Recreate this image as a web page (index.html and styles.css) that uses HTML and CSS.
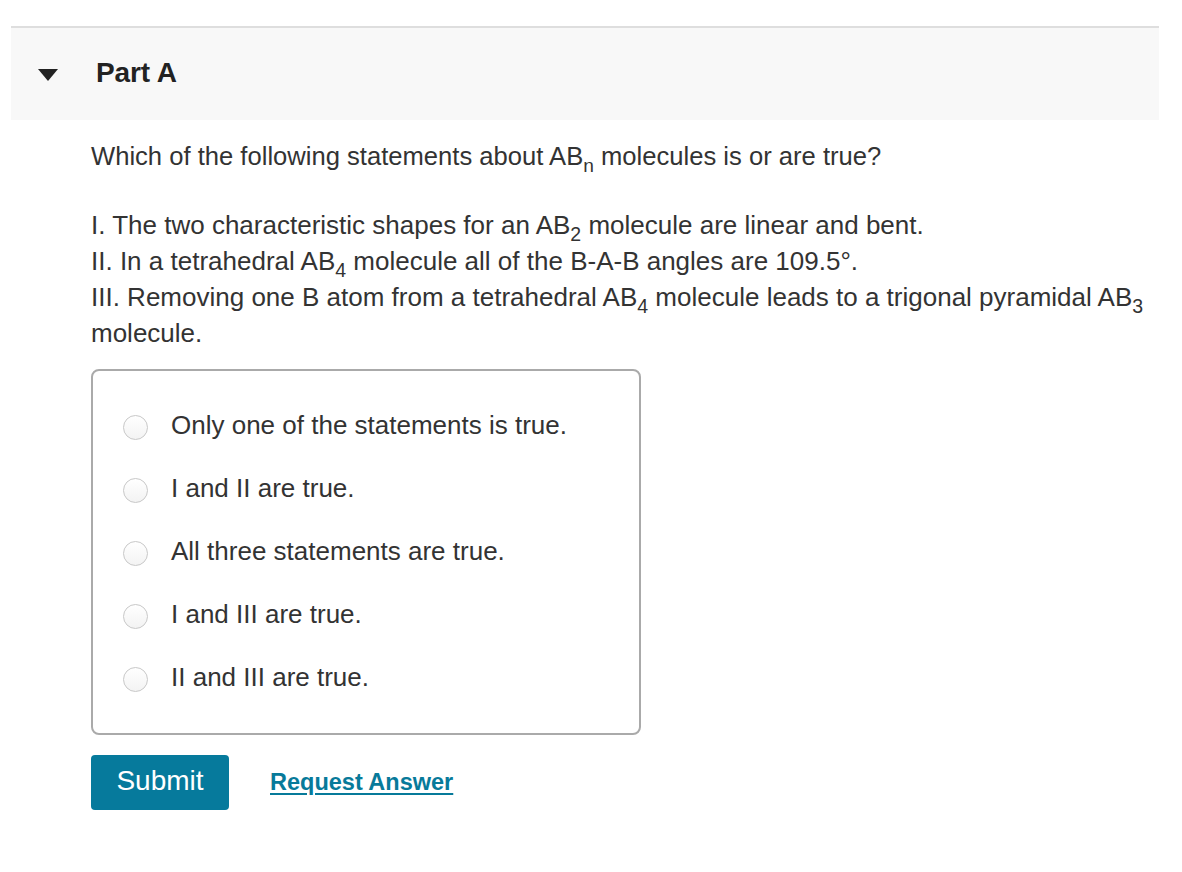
FILE: index.html
```html
<!DOCTYPE html>
<html>
<head>
<meta charset="utf-8">
<link rel="stylesheet" href="styles.css">
</head>
<body>
<div class="part">
  <div class="part-header">
    <span class="caret"></span>
    <h2 class="part-title">Part A</h2>
  </div>
  <div class="part-body">
    <p class="question">Which of the following statements about AB<sub>n</sub> molecules is or are true?</p>
    <p class="statements">I. The two characteristic shapes for an AB<sub>2</sub> molecule are linear and bent.<br>II. In a tetrahedral AB<sub>4</sub> molecule all of the B-A-B angles are 109.5°.<br>III. Removing one B atom from a tetrahedral AB<sub>4</sub> molecule leads to a trigonal pyramidal AB<sub>3</sub> molecule.</p>
    <div class="options">
      <label class="option"><span class="radio"></span><span class="opt-text">Only one of the statements is true.</span></label>
      <label class="option"><span class="radio"></span><span class="opt-text">I and II are true.</span></label>
      <label class="option"><span class="radio"></span><span class="opt-text">All three statements are true.</span></label>
      <label class="option"><span class="radio"></span><span class="opt-text">I and III are true.</span></label>
      <label class="option"><span class="radio"></span><span class="opt-text">II and III are true.</span></label>
    </div>
    <div class="actions">
      <button class="submit">Submit</button>
      <a class="request" href="#">Request Answer</a>
    </div>
  </div>
</div>
</body>
</html>
```

FILE: styles.css
```css
html, body {
  margin: 0;
  padding: 0;
  background: #fff;
}
body {
  font-family: "Liberation Sans", Arial, sans-serif;
  color: #333;
  padding: 26px 23px 0 11px;
}
.part-header {
  display: flex;
  align-items: center;
  height: 94px;
  background: #f8f8f8;
  border-top: 2px solid #dedede;
  box-sizing: border-box;
}
.caret {
  width: 0;
  height: 0;
  border-left: 10px solid transparent;
  border-right: 10px solid transparent;
  border-top: 12px solid #222;
  margin-left: 27px;
  margin-top: 2px;
}
.part-title {
  margin: 0 0 2px 38px;
  font-size: 28px;
  font-weight: bold;
  color: #222;
  letter-spacing: -0.1px;
}
.part-body {
  padding-left: 80px;
  padding-right: 0;
}
.question {
  margin: 18px 0 0;
  font-size: 25.6px;
  line-height: 36px;
}
sub {
  font-size: 75%;
  vertical-align: -0.35em;
  line-height: 0;
}
.statements {
  margin: 33px 0 0;
  font-size: 26px;
  line-height: 36px;
}
.options {
  margin-top: 18px;
  width: 550px;
  height: 366px;
  box-sizing: border-box;
  border: 2px solid #aaa;
  border-radius: 8px;
  padding: 23px 0 0 30px;
  display: flex;
  flex-direction: column;
}
.option {
  display: flex;
  align-items: center;
  height: 63px;
  font-size: 26px;
}
.radio {
  width: 25px;
  height: 25px;
  border-radius: 50%;
  border: 1px solid #c8c8c8;
  background: linear-gradient(#fff, #f3f3f3);
  box-sizing: border-box;
  margin-top: 3px;
  flex: none;
}
.opt-text {
  margin-left: 23px;
}
.actions {
  display: flex;
  align-items: center;
  margin-top: 20px;
}
.submit {
  width: 138px;
  height: 55px;
  background: #067a9c;
  color: #fff;
  border: none;
  border-radius: 4px;
  font-family: "Liberation Sans", Arial, sans-serif;
  font-size: 28px;
  padding: 0 0 4px;
}
.request {
  margin-left: 41px;
  color: #077a9a;
  font-weight: bold;
  font-size: 23.5px;
  text-decoration: underline;
  text-underline-offset: 3px;
}
```
